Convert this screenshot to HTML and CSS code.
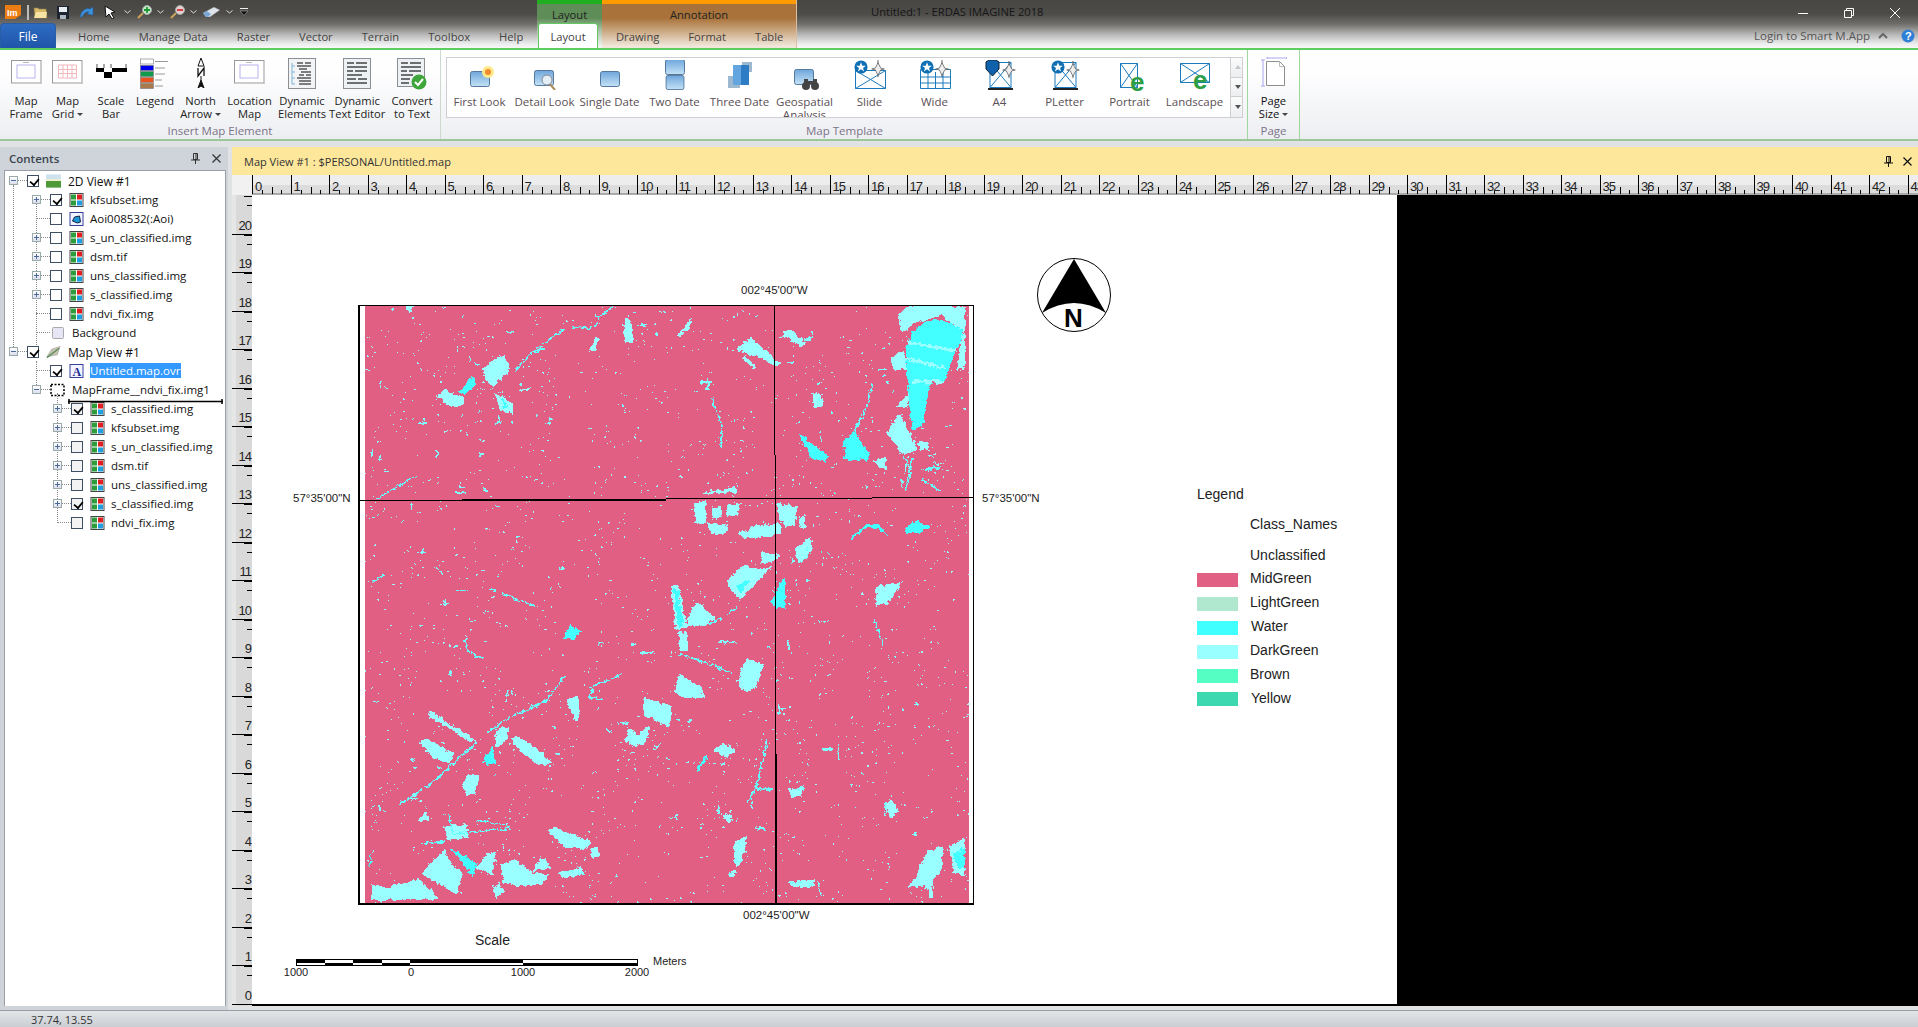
FILE: index.html
```html
<!DOCTYPE html>
<html lang="en">
<head>
<meta charset="utf-8">
<title>Untitled:1 - ERDAS IMAGINE 2018</title>
<link rel="stylesheet" href="styles.css">
</head>
<body>
<svg class="defs" width="0" height="0" aria-hidden="true">
  <defs>
    <filter id="rough" x="-2%" y="-2%" width="104%" height="104%" color-interpolation-filters="sRGB">
      <feTurbulence type="fractalNoise" baseFrequency=".09" numOctaves="3" seed="4" result="n"/>
      <feDisplacementMap in="SourceGraphic" in2="n" scale="15" xChannelSelector="R" yChannelSelector="G" result="d"/>
      <feComponentTransfer in="d"><feFuncA type="discrete" tableValues="0 1 1"/></feComponentTransfer>
    </filter>
    <filter id="noise" x="0" y="0" width="100%" height="100%" color-interpolation-filters="sRGB">
      <feTurbulence type="fractalNoise" baseFrequency=".12" numOctaves="2" seed="11" result="hi"/>
      <feColorMatrix in="hi" values="0 0 0 0 .6  0 0 0 0 1  0 0 0 0 1  30 0 0 0 -22.2" result="spk"/>
      <feTurbulence type="fractalNoise" baseFrequency=".014" numOctaves="2" seed="3" result="lo"/>
      <feColorMatrix in="lo" values="0 0 0 0 0  0 0 0 0 0  0 0 0 0 0  40 0 0 0 -20" result="mask"/>
      <feComposite in="spk" in2="mask" operator="in"/>
      <feComponentTransfer><feFuncA type="discrete" tableValues="0 1 1"/></feComponentTransfer>
    </filter>
    <symbol id="raster" viewBox="0 0 14 14">
      <rect x=".5" y=".5" width="13" height="13" fill="#fff" stroke="#444"/>
      <rect x="1.5" y="1.5" width="5" height="5" fill="#2d9d3c"/><rect x="7.5" y="1.5" width="5" height="5" fill="#e02020"/>
      <rect x="1.5" y="7.5" width="5" height="5" fill="#2d9d3c"/><rect x="7.5" y="7.5" width="5" height="5" fill="#1f9fe0"/>
    </symbol>
    <symbol id="tile" viewBox="0 0 20 16">
      <defs><linearGradient id="tg" x1="0" y1="0" x2="0" y2="1"><stop offset="0" stop-color="#6fa6dc"/><stop offset="1" stop-color="#c4e2f6"/></linearGradient></defs>
      <rect x=".5" y=".5" width="19" height="15" rx="2" fill="url(#tg)" stroke="#55799c"/>
    </symbol>
    <symbol id="star" viewBox="0 0 16 16">
      <circle cx="8" cy="8" r="7.5" fill="#0f6fb5"/>
      <polygon points="8,2.5 9.5,6.5 13.5,6.5 10.3,9 11.5,13 8,10.6 4.5,13 5.7,9 2.5,6.5 6.5,6.5" fill="#fff"/>
    </symbol>
    <symbol id="compass" viewBox="0 0 14 20">
      <path d="M7 0v5M7 15v4" stroke="#555" stroke-width="1"/>
      <polygon points="7,3 10,9 14,10 10,11 7,17 4,11 0,10 4,9" fill="#eee" stroke="#555" stroke-width=".8"/>
    </symbol>
    <symbol id="framemini" viewBox="0 0 31 24">
      <rect x=".5" y=".5" width="29.5" height="22.5" fill="#fff" stroke="#999"/>
      <path d="M1 23.5h30M30.5 1v23" stroke="#ccc"/>
      <rect x="6" y="5" width="18" height="13" fill="#fff" stroke="#b7b4ee"/>
      <path d="M12 2.5h6" stroke="#bbb"/>
    </symbol>
  </defs>
</svg>

<div class="app">
  <header class="titlebar">
    <div class="col-main">
      <div class="qat">
        <svg class="q logo" viewBox="0 0 16 14"><path d="M0 0h16v10l-6 4H0z" fill="#ec7d12"/><text x="2" y="10.500" class="logotxt">Im</text></svg>
        <span class="q-sep"></span>
        <svg class="q folder" viewBox="0 0 15 13"><path d="M1 2h4l1 1h7l1 9H2z" fill="#d9ba6a" stroke="#8d7a46" stroke-width=".6"/><path d="M1 12l2-6h11l-1 6z" fill="#f7e3a3"/></svg>
        <svg class="q save" viewBox="0 0 12 13"><rect width="12" height="13" fill="#1d2530"/><rect x="2" y="1" width="8" height="5" fill="#e8eef3"/><rect x="3" y="9" width="6" height="4" fill="#aeb8c3"/></svg>
        <svg class="q undo" viewBox="0 0 16 12"><path d="M1 11C2 5 7 1 11 3l3-2v8l-6-1 2-2C8 5 5 7 3 11z" fill="#3c8fd9" stroke="#1a5fa6" stroke-width=".5"/></svg>
        <svg class="q arrow" viewBox="0 0 13 14"><path d="M1 1l10 6-4 1 3 5-2 1-3-5-3 3z" fill="#fff" stroke="#111"/></svg>
        <svg class="q chev" viewBox="0 0 7 4"><path d="M.5.5L3.500 3 6.500.5" fill="none" stroke="#ddd"/></svg>
        <svg class="q mag" viewBox="0 0 16 14"><path d="M1 13l5-5" stroke="#c9a15c" stroke-width="2.200"/><circle cx="10" cy="5" r="4.500" fill="#cfe5c9" stroke="#9aa"/><path d="M10 2v6M7 5h6" stroke="#1d9a35" stroke-width="1.800"/></svg>
        <svg class="q chev" viewBox="0 0 7 4"><path d="M.5.5L3.500 3 6.500.5" fill="none" stroke="#ddd"/></svg>
        <svg class="q mag" viewBox="0 0 16 14"><path d="M1 13l5-5" stroke="#c9a15c" stroke-width="2.200"/><circle cx="10" cy="5" r="4.500" fill="#e5d0cf" stroke="#9aa"/><path d="M7 5h6" stroke="#d0303a" stroke-width="1.800"/></svg>
        <svg class="q chev" viewBox="0 0 7 4"><path d="M.5.5L3.500 3 6.500.5" fill="none" stroke="#ddd"/></svg>
        <svg class="q eraser" viewBox="0 0 17 10"><path d="M0 6l11-6 6 3-10 7H3z" fill="#dfe4ea" stroke="#777" stroke-width=".5"/><path d="M0 6l4-2 4 3-3 3H3z" fill="#7aa7d6"/></svg>
        <svg class="q chev" viewBox="0 0 7 4"><path d="M.5.5L3.500 3 6.500.5" fill="none" stroke="#ddd"/></svg>
        <svg class="q cust" viewBox="0 0 8 8"><path d="M0 .5h8" stroke="#eee"/><path d="M0 3h8L4 7.500z" fill="#111" stroke="#ddd" stroke-width=".4"/></svg>
      </div>
      <nav class="tabs">
        <span class="file">File</span>
        <span class="tab first">Home</span><span class="tab">Manage Data</span><span class="tab">Raster</span><span class="tab">Vector</span><span class="tab">Terrain</span><span class="tab">Toolbox</span><span class="tab">Help</span>
      </nav>
    </div>
    <div class="ctx ctx-green">
      <div class="ctx-name">Layout</div>
      <div class="ctx-tabs"><span class="tab active">Layout</span></div>
    </div>
    <div class="ctx ctx-orange">
      <div class="ctx-name">Annotation</div>
      <div class="ctx-tabs"><span class="tab">Drawing</span><span class="tab">Format</span><span class="tab">Table</span></div>
    </div>
    <div class="col-right">
      <div class="winrow">
        <span class="apptitle">Untitled:1 - ERDAS IMAGINE 2018</span>
        <div class="winbtns">
          <svg class="wb" viewBox="0 0 10 10"><path d="M0 5.500h10" stroke="#fff"/></svg>
          <svg class="wb" viewBox="0 0 10 10"><path d="M.5 2.500h7v7h-7zM2.500 2.500v-2h7v7h-2" fill="none" stroke="#fff"/></svg>
          <svg class="wb" viewBox="0 0 10 10"><path d="M0 0l10 10M10 0L0 10" stroke="#fff"/></svg>
        </div>
      </div>
      <div class="loginrow">
        <span class="login">Login to Smart M.App</span>
        <svg class="up" viewBox="0 0 10 8"><path d="M1 6l4-4 4 4" fill="none" stroke="#666" stroke-width="2"/></svg>
        <svg class="help" viewBox="0 0 14 14"><circle cx="7" cy="7" r="6.500" fill="#2f7fd6"/><text x="4" y="11" class="helptxt">?</text></svg>
      </div>
    </div>
  </header>

  <section class="ribbon">
    <div class="group g-insert">
      <div class="btns">
        <div class="rb w40"><svg class="ri i31" viewBox="0 0 31 24"><use href="#framemini"/></svg><span>Map<br>Frame</span></div>
        <div class="rb w42"><svg class="ri i31" viewBox="0 0 31 24"><rect x=".5" y=".5" width="29.500" height="22.500" fill="#fff" stroke="#999"/><path d="M1 23.500h30M30.500 1v23" stroke="#ccc"/><path d="M6.500 5h18v13h-18zM6.500 9.500h18M6.500 13.500h18M11 5v13M15.500 5v13M20 5v13" fill="none" stroke="#f3b6bb"/></svg><span>Map<br>Grid <i class="caret"></i></span></div>
        <div class="rb w44"><svg class="ri iscale" viewBox="0 0 31 14"><rect y="4" width="31" height="8" fill="#fff"/><path d="M0 4h8v4H0zM8 8h8v6H8zM16 4h15v4H16z" fill="#000"/><path d="M1 0v4M8 0v4M15 0v4M30 0v4" stroke="#555"/></svg><span>Scale<br>Bar</span></div>
        <div class="rb w44"><svg class="ri ileg" viewBox="0 0 31 31"><g stroke="#777" stroke-width=".6"><rect x=".5" y="1" width="13" height="5" fill="#fff"/><rect x=".5" y="7.500" width="13" height="5" fill="#0000ee"/><rect x=".5" y="13.500" width="13" height="5" fill="#0f9a4c"/><rect x=".5" y="19.500" width="13" height="5" fill="#e8541f"/><rect x=".5" y="25.500" width="13" height="5" fill="#a87a4c"/></g><path d="M15 3.500h13M15 10h10M15 16h10M15 22h7M15 28h8" stroke="#999" stroke-width="1.200"/></svg><span>Legend</span></div>
        <div class="rb w47"><svg class="ri inorth" viewBox="0 0 8 30"><path d="M4 0L1 8h6z" fill="none" stroke="#111"/><path d="M1 10v8l6-8v8" fill="none" stroke="#111" stroke-width="1.300"/><path d="M4 18v4M1 30l3-8 3 8-3-2z" fill="#111" stroke="#111"/></svg><span>North<br>Arrow <i class="caret"></i></span></div>
        <div class="rb w51"><svg class="ri i31" viewBox="0 0 31 24"><use href="#framemini"/></svg><span>Location<br>Map</span></div>
        <div class="rb w54"><svg class="ri idoc" viewBox="0 0 28 31"><rect x=".5" y=".5" width="27" height="30" fill="#f2f4f6" stroke="#8b8f94"/><path d="M4 5v21M4 8h3M4 14h3M4 20h3M4 26h3" fill="none" stroke="#7fb3d9"/><path d="M9 5h6M17 5h6M9 8h14M11 11h8M13 14h10M11 17h5M18 17h5M9 20h14M11 23h12M11 26h12" stroke="#555" stroke-width="1.300"/></svg><span>Dynamic<br>Elements</span></div>
        <div class="rb w56"><svg class="ri idoc" viewBox="0 0 28 31"><rect x=".5" y=".5" width="27" height="30" fill="#eef1f4" stroke="#8b8f94"/><path d="M4 5h7M13 5h11M4 9h20M4 13h6M12 13h12M4 17h15M4 21h9M15 21h9M4 25h20" stroke="#444" stroke-width="1.500"/></svg><span>Dynamic<br>Text Editor</span></div>
        <div class="rb w54"><svg class="ri iconv" viewBox="0 0 30 32"><rect x=".5" y=".5" width="27" height="28" fill="#eef1f4" stroke="#8b8f94"/><path d="M4 5h7M13 5h11M4 9h20M4 13h6M12 13h12M4 17h12M4 21h9M4 25h8" stroke="#444" stroke-width="1.500"/><circle cx="22" cy="24" r="7.500" fill="#3ea63b"/><path d="M18 24l3 3 5-6" fill="none" stroke="#fff" stroke-width="2"/></svg><span>Convert<br>to Text</span></div>
      </div>
      <div class="glabel">Insert Map Element</div>
    </div>
    <div class="group g-template">
      <div class="gallery">
        <div class="gi"><svg class="gicon" viewBox="0 0 40 30"><use href="#tile" x="10" y="11" width="20" height="16"/><circle cx="28" cy="12" r="6" fill="#ffe98a"/><circle cx="28" cy="12" r="3" fill="#f08a2c"/></svg><span>First Look</span></div>
        <div class="gi"><svg class="gicon" viewBox="0 0 40 30"><use href="#tile" x="9" y="9" width="20" height="18"/><path d="M24 23l6 7" stroke="#a98b5a" stroke-width="2"/><circle cx="22" cy="20" r="5" fill="#e3eef6" stroke="#889"/></svg><span>Detail Look</span></div>
        <div class="gi"><svg class="gicon" viewBox="0 0 40 30"><use href="#tile" x="10" y="11" width="20" height="16"/></svg><span>Single Date</span></div>
        <div class="gi"><svg class="gicon" viewBox="0 0 40 30"><use href="#tile" x="10" y="-1" width="20" height="16"/><use href="#tile" x="10" y="15" width="20" height="15"/></svg><span>Two Date</span></div>
        <div class="gi"><svg class="gicon" viewBox="0 0 40 30"><rect x="22" y="2" width="10" height="10" fill="#9db9cf"/><rect x="8" y="16" width="12" height="12" fill="#9db9cf"/><rect x="13" y="5" width="16" height="20" fill="#2d7cc4"/><rect x="13" y="5" width="8" height="20" fill="#63a5de"/></svg><span>Three Date</span></div>
        <div class="gi"><svg class="gicon" viewBox="0 0 40 30"><use href="#tile" x="9" y="9" width="20" height="16"/><g fill="#444"><circle cx="21" cy="26" r="4"/><circle cx="30" cy="26" r="4"/><rect x="19" y="19" width="4" height="5"/><rect x="28" y="19" width="4" height="5"/><rect x="22" y="21" width="7" height="3"/></g></svg><span>Geospatial<br>Analysis</span></div>
        <div class="gi"><svg class="gicon" viewBox="0 0 40 30"><path d="M5.500 10.500h30v18h-30zM5.500 10.500l30 18M35.500 10.500l-30 18" fill="#fff" stroke="#1b7bbd"/><use href="#star" x="4" y="0" width="14" height="14"/><use href="#compass" x="21" y="0" width="14" height="18"/></svg><span>Slide</span></div>
        <div class="gi"><svg class="gicon" viewBox="0 0 40 30"><path d="M5.500 9.500h30v19h-30zM5.500 17h30M5.500 23h30M13 12v16M20.500 12v16M28 12v16" fill="#fff" stroke="#1b7bbd"/><use href="#star" x="5" y="0" width="14" height="14"/><use href="#compass" x="20" y="0" width="14" height="18"/></svg><span>Wide</span></div>
        <div class="gi"><svg class="gicon" viewBox="0 0 40 30"><path d="M10 2.500h21v25H10zM10 2.500l21 25M31 2.500l-21 25" fill="#fff" stroke="#1b7bbd"/><path d="M8 29h25" stroke="#222" stroke-width="2"/><path d="M6 2l3-2h7l3 2v7l-6.500 7L6 9z" fill="#0f62ab" stroke="#123"/><use href="#compass" x="22" y="1" width="14" height="18"/></svg><span>A4</span></div>
        <div class="gi"><svg class="gicon" viewBox="0 0 40 30"><path d="M10 2.500h21v25H10zM10 2.500l21 25M31 2.500l-21 25" fill="#fff" stroke="#1b7bbd"/><path d="M8 29h25" stroke="#222" stroke-width="2"/><use href="#star" x="6" y="0" width="14" height="14"/><use href="#compass" x="21" y="1" width="14" height="18"/></svg><span>PLetter</span></div>
        <div class="gi"><svg class="gicon tall" viewBox="0 0 40 38"><path d="M10.500 3.500h17v24h-17zM10.500 3.500l17 24M27.500 3.500l-17 24" fill="#fff" stroke="#1b7bbd"/><text x="20" y="31" class="eglyph">e</text></svg><span>Portrait</span></div>
        <div class="gi"><svg class="gicon tall" viewBox="0 0 40 38"><path d="M5.500 3.500h29v19h-29zM5.500 3.500l29 19M34.500 3.500l-29 19" fill="#fff" stroke="#1b7bbd"/><text x="18" y="29" class="eglyph">e</text></svg><span>Landscape</span></div>
        <div class="gscroll">
          <span class="gs dis"><i class="up-tri"></i></span>
          <span class="gs"><i class="dn-tri"></i></span>
          <span class="gs more"><i class="dn-tri"></i></span>
        </div>
      </div>
      <div class="glabel">Map Template</div>
    </div>
    <div class="group g-page">
      <div class="btns">
        <div class="rb w52"><svg class="ri ipage" viewBox="0 0 26 30"><path d="M2 3v26M0 3h4M0 29h4M6 1h20M6 0v2M26 0v2" stroke="#a9a5ef" fill="none"/><path d="M5.500 4.500h13l5 5v19h-18z" fill="#fff" stroke="#8d8d8d"/><path d="M18.500 4.500v5h5" fill="none" stroke="#bbb"/></svg><span class="dark">Page<br>Size <i class="caret"></i></span></div>
      </div>
      <div class="glabel">Page</div>
    </div>
  </section>

  <main class="workspace">
    <aside class="contents">
      <div class="panelhead">
        <span class="paneltitle">Contents</span>
        <svg class="pin" viewBox="0 0 9 11"><path d="M2.500.5h4v6h-4zM0 7h9M4.500 7v4M5 1v5" fill="none" stroke="#333"/></svg>
        <svg class="pclose" viewBox="0 0 9 9"><path d="M.5.5l8 8M8.500.5l-8 8" stroke="#333" stroke-width="1.200"/></svg>
      </div>
      <div class="tree">
        <i class="guide g1"></i><i class="guide g2"></i><i class="guide g3"></i><i class="guide g4"></i>
        <div class="row l0 top"><i class="exp minus"></i><i class="cb on"></i><svg class="ti view" viewBox="0 0 16 14"><rect width="16" height="14" fill="#cfe3ee"/><rect y="7" width="16" height="7" fill="#4e9a38"/><rect y="5" width="16" height="2" fill="#f0f0d0"/></svg><span class="t">2D View #1</span></div>
        <div class="row l1"><i class="exp plus"></i><i class="cb on"></i><svg class="ti"><use href="#raster"/></svg><span class="t">kfsubset.img</span></div>
        <div class="row l1"><i class="exp none"></i><i class="cb"></i><svg class="ti" viewBox="0 0 14 14"><rect x=".5" y=".5" width="13" height="13" fill="#f4f4ff" stroke="#33409c"/><path d="M3 9l2-4 5-1 1 6-3 1z" fill="#1c9ad8" stroke="#124"/></svg><span class="t">Aoi008532(:Aoi)</span></div>
        <div class="row l1"><i class="exp plus"></i><i class="cb"></i><svg class="ti"><use href="#raster"/></svg><span class="t">s_un_classified.img</span></div>
        <div class="row l1"><i class="exp plus"></i><i class="cb"></i><svg class="ti"><use href="#raster"/></svg><span class="t">dsm.tif</span></div>
        <div class="row l1"><i class="exp plus"></i><i class="cb"></i><svg class="ti"><use href="#raster"/></svg><span class="t">uns_classified.img</span></div>
        <div class="row l1"><i class="exp plus"></i><i class="cb"></i><svg class="ti"><use href="#raster"/></svg><span class="t">s_classified.img</span></div>
        <div class="row l1"><i class="exp none"></i><i class="cb"></i><svg class="ti"><use href="#raster"/></svg><span class="t">ndvi_fix.img</span></div>
        <div class="row l1"><i class="exp none"></i><svg class="bgi" viewBox="0 0 12 12"><rect x=".5" y=".5" width="11" height="11" rx="1" fill="#e6e6f6" stroke="#aaa"/></svg><span class="t">Background</span></div>
        <div class="row l0"><i class="exp minus"></i><i class="cb on"></i><svg class="ti view" viewBox="0 0 16 14"><path d="M1 12l5-8 9-3-3 9z" fill="#c9c4b0" stroke="#999" stroke-width=".6"/><path d="M1 13L14 3" stroke="#5d8f5d" stroke-width="1.500"/></svg><span class="t">Map View #1</span></div>
        <div class="row l1"><i class="exp none"></i><i class="cb on"></i><svg class="ti" viewBox="0 0 14 14"><rect x=".5" y=".5" width="13" height="13" fill="#f4f4ff" stroke="#33409c"/><text x="3" y="11.500" class="atxt">A</text></svg><span class="t sel">Untitled.map.ovr</span></div>
        <div class="row l1"><i class="exp minus"></i><svg class="ti frame" viewBox="0 0 15 13"><rect x="1" y="1" width="13" height="11" fill="#fff" stroke="#000" stroke-width="1.500" stroke-dasharray="2 1.500"/></svg><span class="t">MapFrame__ndvi_fix.img1</span></div>
        <div class="row l2"><i class="exp plus"></i><i class="cb on"></i><svg class="ti"><use href="#raster"/></svg><span class="t">s_classified.img</span></div>
        <div class="row l2"><i class="exp plus"></i><i class="cb"></i><svg class="ti"><use href="#raster"/></svg><span class="t">kfsubset.img</span></div>
        <div class="row l2"><i class="exp plus"></i><i class="cb"></i><svg class="ti"><use href="#raster"/></svg><span class="t">s_un_classified.img</span></div>
        <div class="row l2"><i class="exp plus"></i><i class="cb"></i><svg class="ti"><use href="#raster"/></svg><span class="t">dsm.tif</span></div>
        <div class="row l2"><i class="exp plus"></i><i class="cb"></i><svg class="ti"><use href="#raster"/></svg><span class="t">uns_classified.img</span></div>
        <div class="row l2"><i class="exp plus"></i><i class="cb on"></i><svg class="ti"><use href="#raster"/></svg><span class="t">s_classified.img</span></div>
        <div class="row l2"><i class="exp none"></i><i class="cb"></i><svg class="ti"><use href="#raster"/></svg><span class="t">ndvi_fix.img</span></div>
        <svg class="dragbar" viewBox="0 0 155 5"><path d="M0 2.500h155M1 0v5M154 0v5" stroke="#000" stroke-width="1.500"/></svg>
      </div>
    </aside>

    <section class="mapview">
      <div class="viewhead">
        <span class="viewtitle">Map View #1 : $PERSONAL/Untitled.map</span>
        <svg class="pin" viewBox="0 0 9 11"><path d="M2.500.5h4v6h-4zM0 7h9M4.500 7v4M5 1v5" fill="none" stroke="#111"/></svg>
        <svg class="pclose" viewBox="0 0 9 9"><path d="M.5.5l8 8M8.500.5l-8 8" stroke="#111" stroke-width="1.200"/></svg>
      </div>
      <div class="hruler">
        <span class="corner"></span>
        <span class="hc">0</span><span class="hc">1</span><span class="hc">2</span><span class="hc">3</span><span class="hc">4</span><span class="hc">5</span><span class="hc">6</span><span class="hc">7</span><span class="hc">8</span><span class="hc">9</span><span class="hc">10</span><span class="hc">11</span><span class="hc">12</span><span class="hc">13</span><span class="hc">14</span><span class="hc">15</span><span class="hc">16</span><span class="hc">17</span><span class="hc">18</span><span class="hc">19</span><span class="hc">20</span><span class="hc">21</span><span class="hc">22</span><span class="hc">23</span><span class="hc">24</span><span class="hc">25</span><span class="hc">26</span><span class="hc">27</span><span class="hc">28</span><span class="hc">29</span><span class="hc">30</span><span class="hc">31</span><span class="hc">32</span><span class="hc">33</span><span class="hc">34</span><span class="hc">35</span><span class="hc">36</span><span class="hc">37</span><span class="hc">38</span><span class="hc">39</span><span class="hc">40</span><span class="hc">41</span><span class="hc">42</span><span class="hc">43</span>
      </div>
      <div class="viewbody">
        <div class="vruler">
          <span class="vc">20</span><span class="vc">19</span><span class="vc">18</span><span class="vc">17</span><span class="vc">16</span><span class="vc">15</span><span class="vc">14</span><span class="vc">13</span><span class="vc">12</span><span class="vc">11</span><span class="vc">10</span><span class="vc">9</span><span class="vc">8</span><span class="vc">7</span><span class="vc">6</span><span class="vc">5</span><span class="vc">4</span><span class="vc">3</span><span class="vc">2</span><span class="vc">1</span><span class="vc">0</span>
        </div>
        <div class="page">
          <svg class="map" viewBox="0 0 1568 1565" preserveAspectRatio="none">
            <rect x="13" y="14" width="1527" height="1536" class="pink"/>
            <rect x="13" y="14" width="1527" height="1536" class="noise"/>
            <g class="rough">
            <g class="pale">
              <polygon points="115,15 135,15 130,30 118,28"/>
              <polygon points="310,175 345,150 365,140 380,175 370,190 335,222 320,205"/>
              <polygon points="195,245 215,228 235,240 262,250 265,262 245,275 220,268"/>
              <polygon points="340,237 385,262 388,290 355,285"/>
              <polygon points="402,232 440,222 425,232 405,234"/>
              <polygon points="665,65 680,40 690,75 690,110 670,105"/>
              <polygon points="800,95 835,50 840,60 810,95"/>
              <polygon points="578,135 598,95 605,100 595,130"/>
              <polygon points="955,120 990,97 1047,150 1065,165 1055,172 1005,145 985,140 960,130"/>
              <polygon points="965,145 975,145 1000,170 995,178"/>
              <polygon points="1067,85 1085,75 1128,110 1115,120"/>
              <polygon points="1360,40 1385,15 1530,15 1530,175 1510,180 1525,80 1470,40 1400,60 1370,85"/>
              <polygon points="1350,275 1390,235 1385,275"/>
              <polygon points="1330,340 1365,290 1385,330 1410,385 1370,395"/>
              <polygon points="1410,360 1440,365 1440,385 1415,385"/>
              <polygon points="1300,410 1330,405 1332,435 1310,425"/>
              <polygon points="1340,150 1375,130 1385,180 1350,180"/>
              <polygon points="845,520 875,515 875,575 850,575"/>
              <polygon points="890,535 915,530 915,560 890,560"/>
              <polygon points="925,525 960,520 955,555 925,555"/>
              <polygon points="880,570 935,580 920,600 885,600"/>
              <polygon points="955,600 1000,578 1065,575 1065,600 1000,612 975,610"/>
              <polygon points="1055,520 1105,530 1100,580 1075,585 1060,560"/>
              <polygon points="1110,555 1125,550 1125,585 1112,585"/>
              <polygon points="870,495 950,480 950,495 870,497"/>
              <polygon points="925,725 968,678 1005,690 1020,690 1045,680 960,770"/>
              <polygon points="1015,645 1050,650 1063,660 1040,672 1012,675"/>
              <polygon points="785,735 805,730 828,840 800,845"/>
              <polygon points="828,820 850,775 900,815 875,835 830,838"/>
              <polygon points="805,852 828,852 828,900 808,900"/>
              <polygon points="1305,735 1370,722 1335,780 1303,782"/>
              <polygon points="958,970 975,920 1020,935 1005,990 985,1005 960,1000"/>
              <polygon points="795,1005 808,960 865,995 870,1020 825,1022"/>
              <polygon points="715,1020 790,1040 782,1095 715,1065"/>
              <polygon points="672,1130 680,1095 700,1115 735,1090 720,1140 695,1145"/>
              <polygon points="523,1025 550,1015 557,1060 545,1080"/>
              <polygon points="172,1052 295,1130 280,1135 172,1065"/>
              <polygon points="150,1135 170,1125 238,1165 230,1188 185,1175"/>
              <polygon points="380,1125 405,1120 470,1170 490,1190 450,1193 400,1155"/>
              <polygon points="345,1100 375,1095 370,1130 340,1150"/>
              <polygon points="257,1245 275,1215 305,1220 290,1270 270,1270"/>
              <polygon points="147,1335 165,1315 175,1335 155,1340"/>
              <polygon points="475,1360 490,1352 585,1390 575,1408 520,1405"/>
              <polygon points="580,1410 600,1402 605,1430 590,1435"/>
              <polygon points="915,1325 930,1315 945,1335 935,1345"/>
              <polygon points="85,1500 150,1485 205,1540 70,1540"/>
              <polygon points="155,1470 215,1410 225,1440 260,1470 245,1525 200,1500"/>
              <polygon points="355,1450 390,1435 440,1470 480,1470 460,1500 400,1505 365,1495"/>
              <polygon points="435,1465 460,1425 485,1460"/>
              <polygon points="338,1515 350,1490 365,1520 345,1537"/>
              <polygon points="320,1420 345,1415 335,1475 295,1455"/>
              <polygon points="1435,1415 1475,1400 1470,1470 1450,1485 1445,1540 1430,1500 1385,1510 1410,1470"/>
              <polygon points="1490,1400 1530,1380 1530,1480 1500,1470"/>
              <polygon points="1330,1290 1345,1280 1360,1310 1340,1330"/>
              <polygon points="1085,1255 1120,1255 1115,1275 1090,1275"/>
              <polygon points="920,1135 950,1155 925,1175 895,1155"/>
              <polygon points="945,1390 980,1375 965,1440 930,1480 950,1480"/>
              <polygon points="210,1350 270,1345 275,1380 220,1385"/>
              <polygon points="505,1465 560,1455 565,1475 510,1485"/>
              <polygon points="1085,1490 1150,1488 1148,1505 1090,1505"/>
              <polygon points="1145,240 1170,240 1168,275 1145,275"/>
              <polygon points="1100,640 1140,605 1145,640 1110,675"/>
              <polygon points="30,1500 90,1510 70,1540 30,1540"/>
            </g>
            <g class="bright">
              <polygon points="250,235 280,197 293,200 288,222 265,243"/>
              <polygon points="1395,85 1430,55 1470,50 1525,75 1520,110 1505,135 1480,210 1440,215 1425,320 1395,335 1385,210 1380,130"/>
              <polygon points="1108,340 1145,370 1185,400 1175,415 1140,405"/>
              <polygon points="1222,365 1250,335 1290,395 1283,412 1225,410"/>
              <polygon points="1240,610 1280,575 1315,575 1335,610 1310,585 1280,585 1245,615"/>
              <polygon points="1375,585 1410,565 1440,580 1420,598 1385,598"/>
              <polygon points="1040,775 1055,740 1075,710 1075,790 1050,790"/>
              <polygon points="512,870 530,830 558,850 545,870"/>
              <polygon points="225,1405 295,1445 285,1480 255,1440"/>
              <polygon points="25,1420 30,1440 25,1465"/>
              <polygon points="1500,1420 1530,1405 1530,1460 1510,1455"/>
              <polygon points="850,1205 875,1165 880,1175 855,1210"/>
              <polygon points="310,1185 335,1145 345,1190 320,1192"/>
              <polygon points="792,745 805,745 818,835 805,838"/>
              <polygon points="950,735 985,715 965,755"/>
              <polygon points="355,250 375,270 362,280"/>
            </g>
            <path class="bands" d="M1385 110L1510 130M1380 150L1480 175M1395 210L1480 210"/>
            <path class="lines" d="M390 185L430 140 480 100 520 72M535 70L580 72 605 60M600 45L640 18M437 135L470 125M1250 335L1280 280 1295 215M1400 400L1380 490M1420 460L1470 490M100 1295L180 1240 295 1135M320 1110L380 1070 470 1030 520 962M580 995L665 960M810 910L860 925 940 955M30 725L60 705M40 510L145 450M1030 1130L1005 1240 980 1290 1000 1255 1045 1255M890 250L915 320 912 375M1300 820L1325 885M360 755L445 785M265 870L270 900 310 920M225 1320L235 1370 380 1355M295 1335L380 1350M150 1395L215 1390M1000 1355L1025 1360M930 808L955 785M880 835L915 815M590 995L580 1020 615 1025M1420 435L1470 430M1375 400L1395 445M240 745L270 745M330 742L345 745M1165 645L1190 655"/>
            <path class="specks" d="M80 25h6M130 45h4M210 20h3M260 42h3M285 60h8M375 82h15M300 160h4M275 145l5 10M290 160l10 5M400 215h6M470 190h6M490 200h4M405 210v10M50 205v15M45 225h25M130 258h4M65 180h2M135 305h4M150 315h20M165 300v10M255 300h6M300 290l8 -10M295 315v4M340 315h20M380 315h8M350 295v20M445 295h4M470 315h10M480 300v10M575 330h8M625 320v5M665 270v5M670 245h6M690 30h8M700 65h25M745 90h8M755 30h20M915 45h5M925 50h5M940 42h12M1000 42h10M740 153h4M860 210h30M880 200v30M845 237h12M948 305h4M912 372h2M990 368h4M865 395h4M900 447h4M990 436h4M1080 160h20M1095 155v12M1135 95h10M1125 100h12M1145 80v10M1155 215h6M1150 260h20M1160 250v20M1200 260h6M1190 290h6M1110 315h4M1160 340h8M1165 350v15M1320 125h10M1310 180h20M1320 195h10M1330 210h8M1345 235h6M1480 325h20M1520 250h6M1380 420v20M1370 460v20M1440 400h10M1450 420h14M1190 430h15M1280 475v10M1200 495h4M1520 462h4M250 480h15M245 495h25M310 490h15M315 480v15M345 530h8M300 360h4M300 395h10M195 385v20M180 358h3M30 385v15M45 405h10M30 430h8M60 440h15M50 400v10M240 365h3M130 520v20M100 575l10 -10M30 560h10M40 550h5M395 605h6M385 640h4M125 630v5M145 650h20M160 640v10M190 685l20 20M505 690h10M480 740h6M345 708h4M130 712h2M80 712h2M210 780h15M215 770v15M280 825h10M320 800h8M315 790v15M150 835h6M195 880h2M240 888h6M265 870h8M315 875h6M325 915h4M230 950v15M225 970h3M385 1000v15M375 1000v15M30 1030h15M70 1035h8M110 1135h4M135 1200h6M130 1180h6M195 1200h10M280 1205h6M340 1220h3M490 1125h8M525 1140h2M490 1095h2M605 880h15M685 885h10M710 905h30M905 878h45M990 855h4M1030 890h8M1085 870v25M1110 885h3M1055 975h3M1090 905h2M1130 905h4M1060 1050h15M1060 1040v25M1105 725v10M1140 650l-30 25M1130 630v15M1095 665v10M1130 720h6M1110 775h4M1160 825h30M1175 820v15M1350 915h6M1350 690h2M1485 700h2M1225 655h2M1370 1050h8M1400 1035h6V1040M1420 1005h2M1210 1140v45M1170 1155h25M1130 1190h8M1240 1245h6M1250 1305h10M1270 1095h2M1230 1435h2M1135 1500h15M1085 1495h35M1160 1490v30M1400 1370h8M1330 1290v30M1520 1230h3M1270 1215h4M1100 1255h25M990 1285v20M1000 1355h25M960 1380v20M950 1440h15M930 1470h25M910 1330h6M905 1300v15M895 1330h2M800 1320v20M780 1330h25M755 1350h4M790 1350v15M860 1355h4M775 1175h6M800 1190h4M740 1155l20 -15M840 1135h2M910 1190h15M895 1190h6M960 1160h2M620 1095l15 15M650 1085h30M665 1085v6M830 1080h10M800 1075h6M725 1030h6M760 1020h10M600 1050h2M520 1135h2M495 1165h10M380 1215h4M295 1285h4M320 1295h2M210 1320h6M45 1300l20 15M30 1300h8M30 1340h15M30 1360h5M85 1390h2M30 1415h6M130 1280h20M160 1300h10M105 1240h5M120 1235h2M130 1270h10M520 1415h2M550 1470h20M515 1465h20M580 1500v10M585 1530h2M645 1478h4M1190 1490h2M1165 1520v6M550 1450v20"/>
            </g>
            <path class="glines" d="M1048 14V398M1050 398V1165M1052 1165V1549M-3 515H258M258 513H775M775 510H1295M1295 507H1552"/>
            <rect x="-3" y="14" width="1555" height="1536" class="frame-border"/>
          </svg>
          <span class="note n-top">002°45'00"W</span>
          <span class="note n-bot">002°45'00"W</span>
          <span class="note n-left">57°35'00"N</span>
          <span class="note n-right">57°35'00"N</span>
          <svg class="northc" viewBox="0 0 76 76">
            <circle cx="38" cy="38" r="36.500" fill="#fff" stroke="#000"/>
            <path d="M38 2L70 56Q38 36 6 56z" fill="#000"/>
            <text x="37.500" y="69.500" class="northn">N</text>
          </svg>
          <div class="legend">
            <div class="lg-title">Legend</div>
            <div class="lg-col">Class_Names</div>
            <div class="lg-un">Unclassified</div>
            <div class="lg-row"><i class="sw s-mid"></i><span>MidGreen</span></div>
            <div class="lg-row"><i class="sw s-light"></i><span>LightGreen</span></div>
            <div class="lg-row"><i class="sw s-water"></i><span class="nudge">Water</span></div>
            <div class="lg-row"><i class="sw s-dark"></i><span>DarkGreen</span></div>
            <div class="lg-row"><i class="sw s-brown"></i><span>Brown</span></div>
            <div class="lg-row"><i class="sw s-yellow"></i><span class="nudge">Yellow</span></div>
          </div>
          <span class="scale-title">Scale</span>
          <div class="scalebar">
            <i class="seg s28 a"></i><i class="seg s28 b"></i><i class="seg s29 a"></i><i class="seg s28 b"></i><i class="seg s114 a"></i><i class="seg s114 b"></i>
          </div>
          <span class="sl sl1">1000</span><span class="sl sl2">0</span><span class="sl sl3">1000</span><span class="sl sl4">2000</span><span class="sl-m">Meters</span>
        </div>
        <div class="blackout"></div>
      </div>
    </section>
  </main>
  <footer class="status">37.74, 13.55</footer>
</div>
</body>
</html>
```
FILE: styles.css
```css
* { box-sizing: border-box; }
html, body { margin: 0; padding: 0; height: 100%; overflow: hidden; }
body { font-family: "Open Sans", "Noto Sans", sans-serif; font-size: 11.5px; color: #222; background: #dfe1e4; }
i { display: block; font-style: normal; }
svg { display: block; flex: none; }
.defs { position: absolute; }
.app { width: 1918px; height: 1027px; display: flex; flex-direction: column; }

/* title bar */
.titlebar { height: 48px; display: flex; flex: none; background: linear-gradient(#474643 0, #4d4c49 14px, #6f6e6b 24px, #b4b4b3 34px, #ecedee 44px, #f8f8f8 48px); }
.col-main { width: 537px; flex: none; }
.qat { height: 23px; display: flex; align-items: center; padding: 1px 0 0 5px; }
.logo { width: 16px; height: 14px; margin-right: 6px; }
.logotxt { font: bold 9px "Liberation Sans", sans-serif; fill: #fff; }
.q-sep { width: 2px; height: 15px; background: #bbb; margin-right: 4px; }
.folder { width: 15px; height: 13px; margin-right: 9px; }
.save { width: 12px; height: 13px; margin-right: 10px; }
.undo { width: 16px; height: 12px; margin-right: 9px; }
.arrow { width: 13px; height: 14px; margin-right: 7px; }
.chev { width: 7px; height: 4px; margin-right: 6px; }
.mag { width: 16px; height: 14px; margin-right: 4px; }
.eraser { width: 17px; height: 10px; margin-right: 6px; }
.cust { width: 8px; height: 8px; margin-left: 1px; }
.tabs { height: 25px; display: flex; align-items: stretch; }
.file { width: 56px; background: linear-gradient(#2e6cc4, #1f55a8); color: #fff; border-radius: 4px 4px 0 0; display: flex; align-items: center; justify-content: center; font-size: 12px; border: 1px solid #2a5da8; border-bottom: 0; }
.tab { display: flex; align-items: center; color: #444; margin-left: 29px; line-height: 1; padding-top: 2px; font-size: 11.2px; }
.tab.first { margin-left: 22px; }
.ctx { flex: none; display: flex; flex-direction: column; }
.ctx-name { height: 23px; text-align: center; line-height: 29px; color: #222; font-size: 11.2px; }
.ctx-tabs { height: 25px; display: flex; align-items: stretch; }
.ctx-green { width: 65px; background: linear-gradient(#1fae1f 0 4px, #5e8d57 4px, #5e8d57 18px, #a9c0a6 30px, #eef2ee 46px); }
.ctx-green .tab.active { margin: 0 4px 0 1px; width: 60px; justify-content: center; background: #fff; border: 1px solid #63c863; border-bottom: 0; border-radius: 3px 3px 0 0; }
.ctx-orange { width: 195px; background: linear-gradient(#ff9a00 0 4px, #a8723a 4px, #a8723a 18px, #c8a47c 30px, #f0e6da 46px); border-right: 1px solid #d9c0a0; }
.ctx-orange .tab { margin-left: 29px; }
.ctx-orange .tab:nth-child(1) { margin-left: 14px; }
.col-right { flex: 1; min-width: 0; }
.winrow { height: 23px; display: flex; justify-content: space-between; align-items: center; padding-left: 74px; }
.apptitle { color: #161616; font-size: 11.2px; }
.winbtns { display: flex; gap: 36px; padding-right: 18px; margin-top: 3px; }
.wb { width: 10px; height: 10px; }
.loginrow { height: 25px; display: flex; justify-content: flex-end; align-items: center; color: #555; padding-right: 3px; }
.up { width: 10px; height: 8px; margin: 0 13px 0 8px; }
.help { width: 14px; height: 14px; }
.helptxt { font: bold 11px "Liberation Sans", sans-serif; fill: #fff; }

/* ribbon */
.ribbon { height: 93px; flex: none; display: flex; border-top: 2px solid #5fcc5f; border-bottom: 2px solid #9ac89a; background: linear-gradient(#fff, #fdfdfe 30%, #eceef1); }
.group { display: flex; flex-direction: column; border-right: 1px solid #cfd8cf; }
.g-insert { width: 441px; padding-left: 6px; }
.g-template { width: 807px; padding: 7px 4px 0 5px; border-right-color: #9ed69e; }
.g-page { width: 52px; border-right-color: #9ed69e; }
.btns { display: flex; height: 72px; }
.rb { display: grid; grid-template-rows: 38px 26px; justify-items: center; text-align: center; line-height: 12.500px; color: #222; padding-top: 7px; font-size: 11.2px; }
.rb span { white-space: nowrap; }
.rb .dark { color: #111; }
.w40 { width: 40px; } .w42 { width: 43px; } .w44 { width: 44px; } .w47 { width: 47px; } .w51 { width: 51px; } .w54 { width: 54px; } .w56 { width: 56px; } .w52 { width: 51px; }
.ri { margin-top: 1px; }
.i31 { width: 31px; height: 24px; margin-top: 3px; }
.iscale { width: 31px; height: 14px; margin-top: 7px; }
.ileg { width: 31px; height: 31px; }
.inorth { width: 8px; height: 30px; }
.idoc { width: 28px; height: 31px; }
.iconv { width: 30px; height: 32px; }
.ipage { width: 26px; height: 30px; margin-top: 0; }
.glabel { text-align: center; color: #7c7389; line-height: 14px; margin-top: auto; margin-bottom: 1px; }
.g-insert .glabel { padding-right: 6px; }
.gallery { height: 61px; display: flex; background: #fff; border: 1px solid #cdcfd2; flex: none; overflow: hidden; }
.gi { width: 65px; flex: none; display: flex; flex-direction: column; align-items: center; text-align: center; color: #5a4f55; line-height: 13px; white-space: nowrap; }
.gicon { width: 40px; height: 30px; margin-top: 2px; }
.gicon.tall { height: 38px; margin-bottom: -8px; }
.gi span { margin-top: 5px; }
.eglyph { font: bold 26px "Liberation Sans", sans-serif; fill: #2e9e44; }
.gscroll { width: 14px; margin-left: 3px; display: flex; flex-direction: column; flex: none; }
.gs { height: 20px; background: linear-gradient(#fbfbfb, #eceef0); border-left: 1px solid #cdcfd2; border-bottom: 1px solid #cdcfd2; display: flex; align-items: center; justify-content: center; width: 15px; }
.gs.more { border-bottom: 0; }
.up-tri { width: 0; height: 0; border: 3px solid transparent; border-top: 0; border-bottom: 4px solid #c4c6c8; }
.dn-tri { width: 0; height: 0; border: 3px solid transparent; border-bottom: 0; border-top: 4px solid #555; }
.gs.more .dn-tri { box-shadow: 0 -3px 0 -2px #555; }
.caret { display: inline-block; width: 0; height: 0; border: 3px solid transparent; border-bottom: 0; border-top: 3px solid #444; vertical-align: 2px; }

/* workspace */
.workspace { height: 869px; flex: none; display: flex; padding-top: 6px; background: #e0e2e4; gap: 4px; }
.contents { width: 228px; flex: none; background: #ced4da; display: flex; flex-direction: column; }
.panelhead { height: 23px; flex: none; display: flex; align-items: center; padding-left: 9px; }
.paneltitle { font-weight: 600; color: #3a444e; flex: 1; }
.pin { width: 9px; height: 11px; margin-right: 12px; }
.pclose { width: 9px; height: 9px; margin-right: 7px; }
.tree { position: relative; flex: 1; margin: 0 2px 4px 4px; background: #fff; border: 1px solid #9aa0a6; border-bottom: 0; }
.row { display: flex; align-items: center; height: 19px; white-space: nowrap; color: #111; }
.l0 { padding-left: 4px; font-size: 12px; }
.l0 .t { padding-top: 2px; }
.l1 { padding-left: 27px; }
.l2 { padding-left: 48px; }
.exp { position: relative; width: 9px; height: 9px; margin-right: 9px; flex: none; }
.exp::after { content: ""; position: absolute; left: 9px; top: 4px; width: 9px; border-top: 1px dotted #888; }
.exp.none::after { left: 4px; width: 14px; }
.minus { background: linear-gradient(#fff, #dde); border: 1px solid #9aa; }
.plus { border: 1px solid #9aa; background-image: linear-gradient(#4a6a9a, #4a6a9a), linear-gradient(#fff, #dde); background-size: 1px 5px, auto; background-position: 3px 1px, 0 0; background-repeat: no-repeat; }
.minus::before, .plus::before { content: ""; position: absolute; left: 1px; top: 3px; width: 5px; height: 1px; background: #4a6a9a; }
.minus::after, .plus::after { left: 8px; top: 3px; }
.cb { position: relative; z-index: 1; width: 12px; height: 12px; border: 1px solid #3f4f63; background: #fff; margin-right: 7px; flex: none; }
.l2 .cb { background: #f3f3f3; }
.cb.on::after { content: ""; position: absolute; left: 2.5px; top: 0; width: 5px; height: 8px; border: solid #000; border-width: 0 2px 2px 0; transform: rotate(40deg) scale(.85); }
.ti { width: 15px; height: 14px; margin-right: 6px; flex: none; }
.l0 .ti { margin-right: 7px; }
.ti.frame { margin-right: 7px; }
.bgi { width: 12px; height: 12px; margin: 0 8px 0 2px; flex: none; }
.t { line-height: 15px; }
.t.sel { background: #3399ff; color: #fff; padding-right: 1px; }
.atxt { font: bold 12px "Liberation Serif", serif; fill: #1c2a8c; }
.guide { position: absolute; border-left: 1px dotted #888; width: 0; }
.g1 { left: 8px; top: 14px; height: 170px; }
.g2 { left: 31px; top: 30px; height: 146px; }
.g3 { left: 31px; top: 190px; height: 28px; }
.g4 { left: 52px; top: 222px; height: 130px; }
.dragbar { position: absolute; left: 63px; top: 228px; width: 155px; height: 5px; }

/* map view */
.mapview { flex: 1; min-width: 0; display: flex; flex-direction: column; }
.viewhead { height: 28px; flex: none; background: #fde79b; display: flex; align-items: center; padding-left: 12px; color: #333; font-size: 11px; }
.viewtitle { flex: 1; }
.viewhead .pin { margin-right: 10px; }
.viewhead .pclose { margin-right: 6px; }
.hruler { height: 20px; flex: none; display: flex; overflow: hidden; background: linear-gradient(#ededed 0, #ededed 10px, #dcdcdc 10px, #dcdcdc 18px, #aaa 18px); }
.corner { width: 20px; flex: none; background: #f1f1f1; }
.hc { width: 38.5px; flex: none; height: 19px; border-left: 1px solid #000; font: 13px/1 "Liberation Sans", sans-serif; letter-spacing: -1px; padding: 5px 0 0 2px; color: #222; background-image: linear-gradient(#000, #000), linear-gradient(#000, #000), linear-gradient(#000, #000); background-size: 1px 4px, 1px 7px, 1px 4px; background-repeat: no-repeat; background-position: 9px 100%, 19px 100%, 28px 100%; }
.viewbody { flex: 1; min-height: 0; display: flex; }
.vruler { width: 20px; flex: none; padding-top: 1px; background: linear-gradient(90deg, #e6e6e6 0, #e6e6e6 4px, #d9d9d9 4px); overflow: hidden; height: 811px; }
.vc { display: flex; align-items: flex-end; justify-content: flex-end; height: 38.5px; border-bottom: 1px solid #000; font: 13px/1 "Liberation Sans", sans-serif; letter-spacing: -1px; padding: 0 1px 2px 0; color: #222; background-image: linear-gradient(#000, #000), linear-gradient(#000, #000); background-size: 5px 1px, 8px 1px; background-repeat: no-repeat; background-position: 100% 9px, 100% 0; }
.page { position: relative; width: 1145px; height: 811px; flex: none; background: #fff; border-bottom: 2px solid #000; overflow: hidden; font-family: "Liberation Sans", Arial, sans-serif; color: #222; }
.blackout { flex: 1; height: 811px; background: #000; }
.map { position: absolute; left: 108px; top: 105px; width: 620px; height: 610px; shape-rendering: crispEdges; overflow: visible; }
.pink { fill: #e05f82; }
.noise { fill: #000; filter: url(#noise); }
.rough { filter: url(#rough); }
.pale polygon { fill: #99ffff; }
.bright polygon { fill: #44ffff; }
.bands { fill: none; stroke: #99ffff; stroke-width: 7; }
.lines { fill: none; stroke: #66ffff; stroke-width: 4; }
.specks { fill: none; stroke: #80ffff; stroke-width: 4; }
.glines { fill: none; stroke: #000; stroke-width: 3; }
.frame-border { fill: none; stroke: #000; stroke-width: 4; }
.note { position: absolute; font-size: 11.5px; line-height: 14px; white-space: nowrap; }
.n-top { left: 489px; top: 88px; }
.n-bot { left: 491px; top: 713px; }
.n-left { left: 41px; top: 296px; }
.n-right { left: 730px; top: 296px; }
.northc { position: absolute; left: 784px; top: 62px; width: 76px; height: 76px; }
.northn { font: bold 26px "Liberation Sans", sans-serif; text-anchor: middle; fill: #000; }
.legend { position: absolute; left: 945px; top: 291px; font-size: 14px; line-height: 16px; }
.lg-title { height: 22px; }
.lg-col { padding-left: 53px; padding-top: 8px; box-sizing: content-box; height: 22px; }
.lg-un { padding-left: 53px; height: 21px; margin-top: 9px; }
.lg-row { display: flex; align-items: center; height: 23.900px; }
.lg-row span { margin-left: 12px; margin-top: -3px; }
.lg-row .nudge { margin-left: 13px; }
.sw { width: 41px; height: 14px; }
.s-mid { background: #e15f82; }
.s-light { background: #b0e8cf; }
.s-water { background: #40ffff; }
.s-dark { background: #99ffff; }
.s-brown { background: #55ffc4; }
.s-yellow { background: #3cd9b0; }
.scale-title { position: absolute; left: 223px; top: 737px; font-size: 14px; line-height: 16px; }
.scalebar { position: absolute; left: 44px; top: 764px; width: 342px; height: 7px; display: flex; border: 1px solid #000; }
.seg { height: 100%; }
.seg.a { background: linear-gradient(#000 50%, #fff 50%); }
.seg.b { background: linear-gradient(#fff 50%, #000 50%); }
.s28 { width: 28px; } .s29 { width: 29px; } .s114 { width: 114px; }
.sl { position: absolute; top: 771px; font-size: 11px; line-height: 13px; transform: translateX(-50%); }
.sl1 { left: 44px; } .sl2 { left: 159px; } .sl3 { left: 271px; } .sl4 { left: 385px; }
.sl-m { position: absolute; left: 401px; top: 760px; font-size: 11px; line-height: 13px; }

/* status */
.status { flex: 1; border-top: 1px solid #9a9ea3; background: linear-gradient(#e3e5e8, #c9cdd1); padding-left: 31px; line-height: 17px; color: #333; font-size: 11px; }
```
